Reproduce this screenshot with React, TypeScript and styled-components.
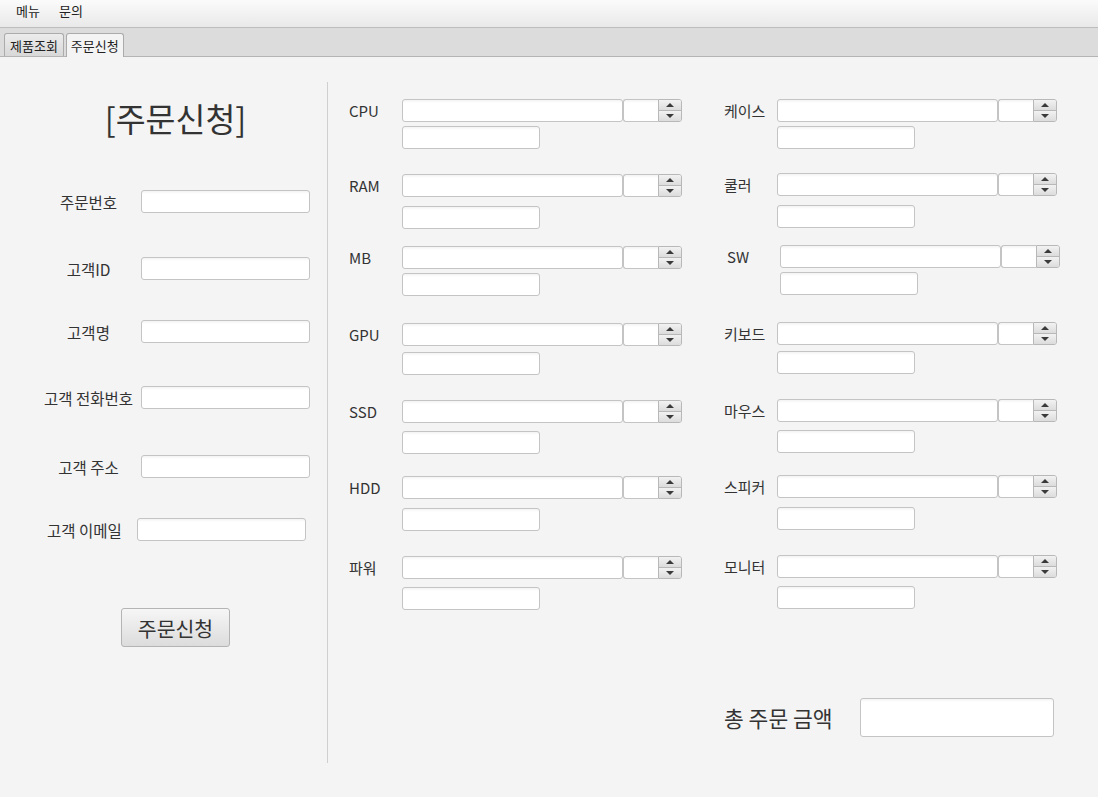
import React from "react";
import styled, { createGlobalStyle } from "styled-components";

const GlobalStyle = createGlobalStyle`
  html, body { margin: 0; padding: 0; background: #f4f4f4; }
  body {
    font-family: "Noto Sans CJK KR", "Open Sans", "Noto Sans", sans-serif;
    color: #333;
  }
  * { box-sizing: border-box; }
`;

const Page = styled.div`
  width: 1098px;
  height: 797px;
  display: flex;
  flex-direction: column;
  background: #f4f4f4;
  overflow: hidden;
`;

const MenuBar = styled.div`
  height: 28px;
  display: flex;
  align-items: center;
  padding-left: 8px;
  background: linear-gradient(#fbfbfb, #e9e9e9);
  border-bottom: 1px solid #bdbdbd;
`;

const MenuItem = styled.span`
  font-size: 13px;
  line-height: 16px;
  padding: 0 8px;
  margin-right: 3px;
  color: #222;
  margin-top: -5px;
`;

const TabBar = styled.div`
  height: 29px;
  display: flex;
  align-items: flex-end;
  gap: 2px;
  padding-left: 4px;
  background: #dcdcdc;
  border-bottom: 1px solid #b4b4b4;
`;

const Tab = styled.div<{ $active?: boolean }>`
  height: ${(p) => (p.$active ? 24 : 23)}px;
  margin-bottom: ${(p) => (p.$active ? -1 : 0)}px;
  padding: 0 ${(p) => (p.$active ? 4 : 5)}px;
  display: flex;
  align-items: center;
  font-size: 13px;
  color: #222;
  border: 1px solid #ababab;
  border-bottom: none;
  border-radius: 3px 3px 0 0;
  background: ${(p) => (p.$active ? "#f4f4f4" : "linear-gradient(#ececec, #d8d8d8)")};
`;

const Main = styled.div`
  flex: 1;
  display: flex;
`;

const LeftPanel = styled.div`
  width: 327px;
  display: flex;
  flex-direction: column;
`;

const Title = styled.div`
  margin-top: 42px;
  padding-left: 24px;
  text-align: center;
  font-size: 32.5px;
  line-height: 37px;
  color: #333;
`;

const FormRow = styled.div<{ $top: number; $shift?: number }>`
  display: flex;
  align-items: center;
  margin-top: ${(p) => p.$top}px;
  padding-left: ${(p) => 36 + (p.$shift ?? 0)}px;
`;

const FormLabel = styled.span`
  width: 105px;
  text-align: center;
  font-size: 15.5px;
  color: #333;
  white-space: nowrap;
`;

const TextField = styled.div<{ $w: number; $h?: number }>`
  width: ${(p) => p.$w}px;
  height: ${(p) => p.$h ?? 23}px;
  background: linear-gradient(#f3f3f3 0px, #fff 3px, #fff);
  border: 1px solid #c4c4c4;
  border-radius: 3px;
  flex-shrink: 0;
`;

const ButtonRow = styled.div`
  margin-top: 67px;
  padding-left: 121px;
  display: flex;
`;

const Button = styled.div`
  width: 109px;
  height: 39px;
  display: flex;
  align-items: center;
  justify-content: center;
  font-size: 20.5px;
  color: #333;
  border: 1px solid #b4b4b4;
  border-radius: 3px;
  background: linear-gradient(#f6f6f6, #dcdcdc);
`;

const Separator = styled.div`
  width: 1px;
  margin-top: 25px;
  height: 681px;
  background: #cfcfcf;
`;

const PartColumn = styled.div<{ $w?: number }>`
  width: ${(p) => (p.$w ? `${p.$w}px` : "auto")};
  flex: ${(p) => (p.$w ? "none" : "1")};
  display: flex;
  flex-direction: column;
  padding-top: 42px;
  padding-left: 21px;
`;

const PartRow = styled.div<{ $top: number; $shift?: number }>`
  display: flex;
  margin-top: ${(p) => p.$top}px;
  padding-left: ${(p) => p.$shift ?? 0}px;
`;

const PartLabel = styled.span`
  width: 53px;
  height: 23px;
  line-height: 23px;
  font-size: 15px;
  color: #333;
  white-space: nowrap;
`;

const PartFields = styled.div<{ $gap: number }>`
  display: flex;
  flex-direction: column;
  gap: ${(p) => p.$gap}px;
`;

const SpinnerLine = styled.div`
  display: flex;
`;

const Spinner = styled.div`
  display: flex;
  height: 23px;
`;

const SpinInput = styled.div`
  width: 35px;
  height: 23px;
  background: linear-gradient(#f3f3f3 0px, #fff 3px, #fff);
  border: 1px solid #c4c4c4;
  border-right: none;
  border-radius: 3px 0 0 3px;
`;

const SpinButtons = styled.div`
  width: 24px;
  height: 23px;
  display: flex;
  flex-direction: column;
  border: 1px solid #b8b8b8;
  border-radius: 0 3px 3px 0;
  overflow: hidden;
`;

const SpinButton = styled.div<{ $down?: boolean }>`
  flex: 1;
  display: flex;
  align-items: center;
  justify-content: center;
  background: linear-gradient(#f2f2f2, #dcdcdc);
  border-top: ${(p) => (p.$down ? "1px solid #b8b8b8" : "none")};
`;

const Arrow = styled.span<{ $down?: boolean }>`
  width: 0;
  height: 0;
  border-left: 4px solid transparent;
  border-right: 4px solid transparent;
  ${(p) => (p.$down ? "border-top: 4px solid #3a3a3a;" : "border-bottom: 4px solid #3a3a3a;")}
`;

const TotalRow = styled.div`
  display: flex;
  align-items: center;
  margin-top: 89px;
`;

const TotalLabel = styled.span`
  width: 136px;
  font-size: 21.5px;
  color: #333;
  white-space: nowrap;
`;

type Part = { name: string; top: number; gap: number; shift?: number };

const middleParts: Part[] = [
  { name: "CPU", top: 0, gap: 4 },
  { name: "RAM", top: 25, gap: 9 },
  { name: "MB", top: 17, gap: 4 },
  { name: "GPU", top: 27, gap: 6 },
  { name: "SSD", top: 25, gap: 8 },
  { name: "HDD", top: 22, gap: 9 },
  { name: "파워", top: 25, gap: 8 },
];

const rightParts: Part[] = [
  { name: "케이스", top: 0, gap: 4 },
  { name: "쿨러", top: 24, gap: 9 },
  { name: "SW", top: 17, gap: 4, shift: 3 },
  { name: "키보드", top: 27, gap: 6 },
  { name: "마우스", top: 25, gap: 8 },
  { name: "스피커", top: 22, gap: 9 },
  { name: "모니터", top: 25, gap: 8 },
];

const customerFields = [
  { label: "주문번호", top: 54 },
  { label: "고객ID", top: 44 },
  { label: "고객명", top: 40 },
  { label: "고객 전화번호", top: 43 },
  { label: "고객 주소", top: 46 },
  { label: "고객 이메일", top: 40, shift: -4 },
];

function PartItem({ name, top, gap, shift }: Part) {
  return (
    <PartRow $top={top} $shift={shift}>
      <PartLabel>{name}</PartLabel>
      <PartFields $gap={gap}>
        <SpinnerLine>
          <TextField $w={221} />
          <Spinner>
            <SpinInput />
            <SpinButtons>
              <SpinButton>
                <Arrow />
              </SpinButton>
              <SpinButton $down>
                <Arrow $down />
              </SpinButton>
            </SpinButtons>
          </Spinner>
        </SpinnerLine>
        <TextField $w={138} />
      </PartFields>
    </PartRow>
  );
}

export default function App() {
  return (
    <Page>
      <GlobalStyle />
      <MenuBar>
        <MenuItem>메뉴</MenuItem>
        <MenuItem>문의</MenuItem>
      </MenuBar>
      <TabBar>
        <Tab>제품조회</Tab>
        <Tab $active>주문신청</Tab>
      </TabBar>
      <Main>
        <LeftPanel>
          <Title>[주문신청]</Title>
          {customerFields.map((f) => (
            <FormRow key={f.label} $top={f.top} $shift={f.shift}>
              <FormLabel>{f.label}</FormLabel>
              <TextField $w={169} />
            </FormRow>
          ))}
          <ButtonRow>
            <Button>주문신청</Button>
          </ButtonRow>
        </LeftPanel>
        <Separator />
        <PartColumn $w={375}>
          {middleParts.map((p) => (
            <PartItem key={p.name} {...p} />
          ))}
        </PartColumn>
        <PartColumn>
          {rightParts.map((p) => (
            <PartItem key={p.name} {...p} />
          ))}
          <TotalRow>
            <TotalLabel>총 주문 금액</TotalLabel>
            <TextField $w={194} $h={39} />
          </TotalRow>
        </PartColumn>
      </Main>
    </Page>
  );
}
